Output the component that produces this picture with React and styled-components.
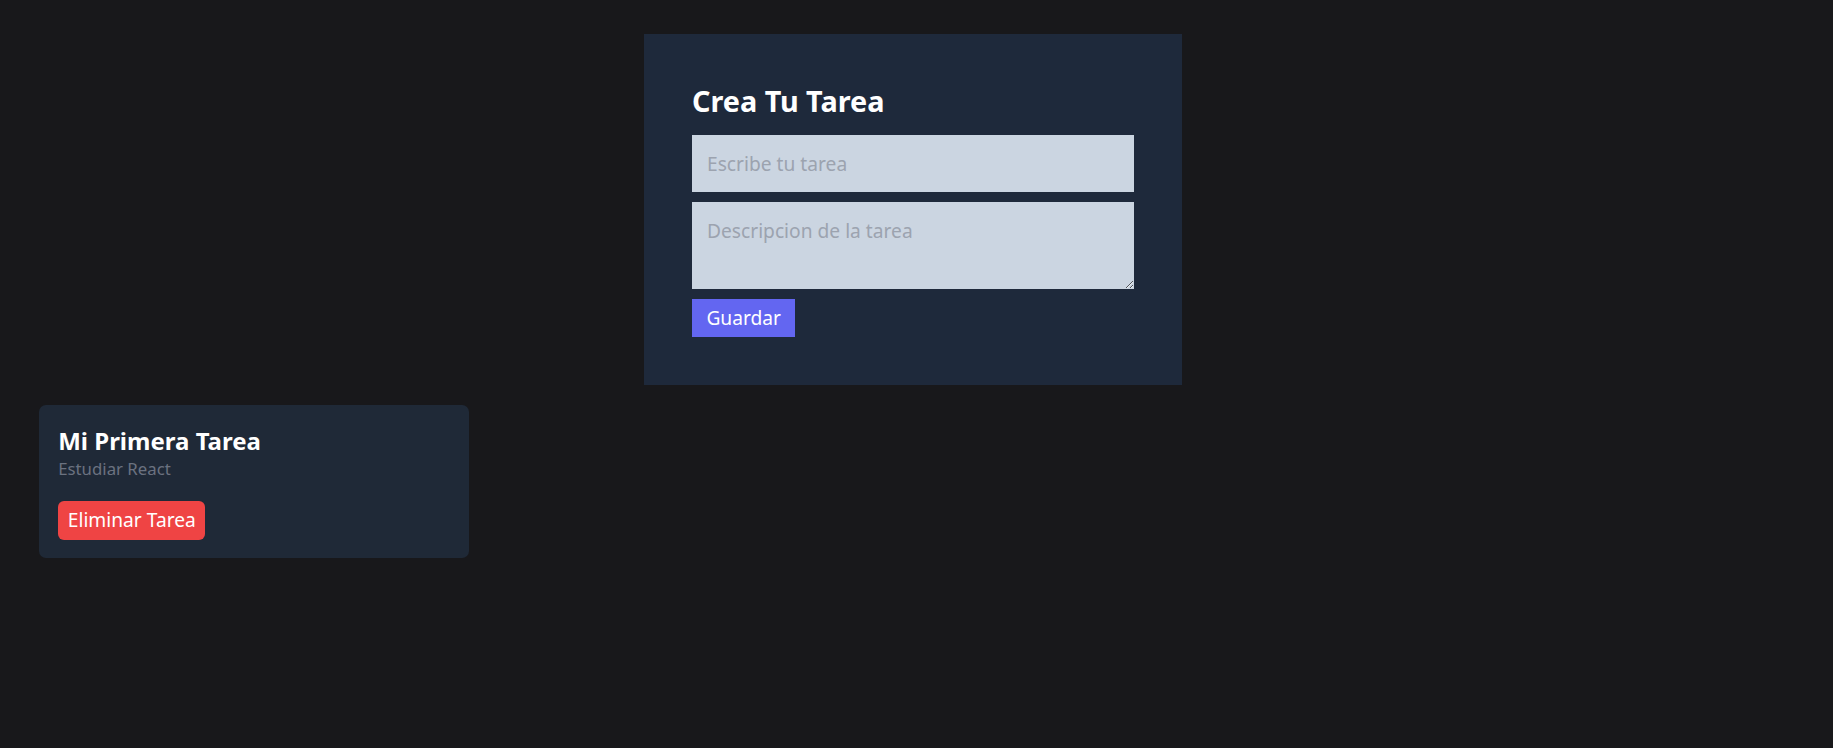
import React from 'react'
import styled, { createGlobalStyle } from 'styled-components'

const GlobalStyle = createGlobalStyle`
  html, body {
    margin: 0;
    padding: 0;
    background: #18181b;
    font-family: "Noto Sans", "Open Sans", sans-serif;
    font-size: 19.2px;
    line-height: 28.8px;
    color: #ffffff;
  }
  * {
    box-sizing: border-box;
  }
`

export default function App() {
  const tasks = [
    { id: 1, title: 'Mi Primera Tarea', description: 'Estudiar React' },
  ]

  return (
    <Page>
      <GlobalStyle />
      <FormRow>
        <FormBox onSubmit={(e) => e.preventDefault()}>
          <FormTitle>Crea Tu Tarea</FormTitle>
          <TextInput placeholder="Escribe tu tarea" />
          <TextArea placeholder="Descripcion de la tarea" rows={2} />
          <SaveButton type="submit">Guardar</SaveButton>
        </FormBox>
      </FormRow>
      <TaskGrid>
        {tasks.map((task) => (
          <TaskCard key={task.id}>
            <TaskTitle>{task.title}</TaskTitle>
            <TaskDescription>{task.description}</TaskDescription>
            <DeleteButton>Eliminar Tarea</DeleteButton>
          </TaskCard>
        ))}
      </TaskGrid>
    </Page>
  )
}

const Page = styled.main`
  min-height: 748px;
  padding-top: 34px;
`

const FormRow = styled.div`
  display: flex;
  justify-content: center;
  padding-right: 7px;
`

const FormBox = styled.form`
  width: 538px;
  background: #1e293b;
  padding: 48px;
  display: flex;
  flex-direction: column;
  align-items: flex-start;
`

const FormTitle = styled.h1`
  margin: 0 0 14.4px;
  font-size: 28.8px;
  line-height: 38.4px;
  font-weight: 700;
  color: #ffffff;
`

const fieldStyles = `
  width: 442px;
  border: none;
  border-radius: 0;
  outline: none;
  background: #cbd5e1;
  color: #1e293b;
  font-family: "Noto Sans", "Open Sans", sans-serif;
  font-size: 19.2px;
  line-height: 28.8px;
  padding: 14.4px 15px;
  &::placeholder {
    color: #9ca3af;
  }
`

const TextInput = styled.input`
  ${fieldStyles}
  height: 57.6px;
  margin: 0 0 10px;
`

const TextArea = styled.textarea`
  ${fieldStyles}
  display: block;
  height: 86.4px;
  margin: 0 0 10px;
`

const SaveButton = styled.button`
  background: #6366f1;
  color: #ffffff;
  border: none;
  border-radius: 0;
  font-family: "Noto Sans", "Open Sans", sans-serif;
  font-size: 19.2px;
  line-height: 28.8px;
  padding: 4.8px 14.4px;
  height: 38.4px;
  cursor: pointer;
`

const TaskGrid = styled.section`
  display: grid;
  grid-template-columns: repeat(4, 430px);
  gap: 9.6px;
  padding: 20px 39px;
`

const TaskCard = styled.article`
  background: #1f2937;
  border-radius: 7px;
  padding: 18.6px 19.2px;
`

const TaskTitle = styled.h2`
  margin: 0;
  font-size: 24px;
  line-height: 33.6px;
  font-weight: 700;
  color: #ffffff;
`

const TaskDescription = styled.p`
  margin: 0;
  font-size: 16.8px;
  line-height: 24px;
  color: #6b7280;
`

const DeleteButton = styled.button`
  margin-top: 20px;
  background: #ef4444;
  color: #ffffff;
  border: none;
  border-radius: 6px;
  font-family: "Noto Sans", "Open Sans", sans-serif;
  font-size: 19.2px;
  line-height: 28.8px;
  padding: 4.8px 9.6px;
  height: 38.4px;
  cursor: pointer;
`
